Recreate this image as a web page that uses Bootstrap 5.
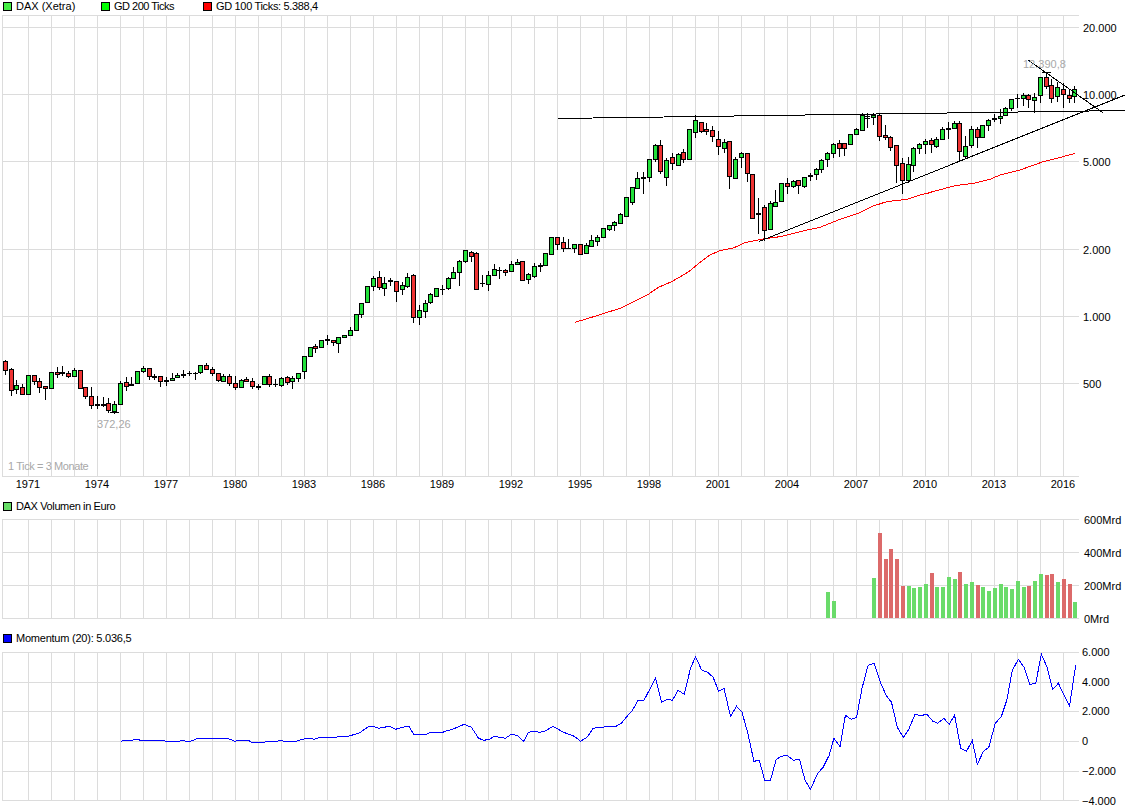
<!DOCTYPE html>
<html lang="de">
<head>
<meta charset="utf-8">
<title>DAX (Xetra)</title>
<link href="https://cdn.jsdelivr.net/npm/bootstrap@5.3.0/dist/css/bootstrap.min.css" rel="stylesheet">
<style>
body{background:#fff;color:#000;font-family:"Liberation Sans",Arial,sans-serif;font-size:11px;line-height:12px;overflow:hidden}
.chart-page{width:1125px;height:812px}
.legend-row{height:15px;padding-left:3px;padding-top:0}
.legend-row.pad-vol{padding-top:1px}
.legend-row.pad-mom{padding-top:2px}
.legend-item{width:98px;gap:4px;white-space:nowrap}
.legend-item.w-b{width:102px}
.swatch{width:9px;height:9px;border:1px solid #000;display:block;flex:none}
.sw-dax{background:#44ee44}.sw-g200{background:#00ff00}.sw-g100{background:#ff0000}.sw-vol{background:#66dd66}.sw-mom{background:#0000ff}
.ls-a{letter-spacing:-.5px}.ls-b{letter-spacing:-.33px}.ls-c{letter-spacing:-.37px}.ls-d{letter-spacing:-.23px}
.panel-svg{display:block;width:1125px}
.ps-main{height:484px}.ps-vol{height:116px}.ps-mom{height:167px}
.panel-svg text{font-family:"Liberation Sans",Arial,sans-serif;font-size:11px;fill:#000;dominant-baseline:central}
.panel-svg text.note{fill:#a8a8a8}
.panel-svg text.note-t{letter-spacing:-.4px}
.gridl{stroke:#dcdcdc;stroke-width:1;shape-rendering:crispEdges}
.trend{stroke:#000;fill:none;stroke-width:1;shape-rendering:crispEdges}
.wick{stroke:#000;stroke-width:1;shape-rendering:crispEdges}
.body-g{fill:#22e03a;stroke:#000;stroke-width:1;shape-rendering:crispEdges}
.body-r{fill:#ee3333;stroke:#000;stroke-width:1;shape-rendering:crispEdges}
.ma{stroke:#ff0000;fill:none;stroke-width:1;shape-rendering:crispEdges}
.mom{stroke:#0000ff;fill:none;stroke-width:1;shape-rendering:crispEdges}
.bar-g{fill:#6adb6a;shape-rendering:crispEdges}
.bar-r{fill:#dc6a6a;shape-rendering:crispEdges}
</style>
</head>
<body class="m-0">
<main class="chart-page d-flex flex-column">
  <div class="legend-row d-flex align-items-start">
    <div class="legend-item d-flex align-items-center"><span class="swatch sw-dax"></span><span>DAX (Xetra)</span></div>
    <div class="legend-item w-b d-flex align-items-center"><span class="swatch sw-g200"></span><span class="ls-a">GD 200 Ticks</span></div>
    <div class="legend-item d-flex align-items-center"><span class="swatch sw-g100"></span><span class="ls-b">GD 100 Ticks: 5.388,4</span></div>
  </div>
  <svg id="pMain" class="panel-svg ps-main" viewBox="0 15 1125 484" xmlns="http://www.w3.org/2000/svg"></svg>
  <div class="legend-row pad-vol d-flex align-items-start">
    <div class="legend-item d-flex align-items-center"><span class="swatch sw-vol"></span><span class="ls-c">DAX Volumen in Euro</span></div>
  </div>
  <svg id="pVol" class="panel-svg ps-vol" viewBox="0 514 1125 116" xmlns="http://www.w3.org/2000/svg"></svg>
  <div class="legend-row pad-mom d-flex align-items-start">
    <div class="legend-item d-flex align-items-center"><span class="swatch sw-mom"></span><span class="ls-d">Momentum (20): 5.036,5</span></div>
  </div>
  <svg id="pMom" class="panel-svg ps-mom" viewBox="0 645 1125 167" xmlns="http://www.w3.org/2000/svg"></svg>
</main>
<script>
const NS='http://www.w3.org/2000/svg';
function el(p,n,a,t){const e=document.createElementNS(NS,n);for(const k in a)e.setAttribute(k,a[k]);if(t!==undefined)e.textContent=t;p.appendChild(e);return e;}
function grid(p,top,bot,ys){
  for(const y of ys)el(p,'line',{x1:2,x2:1079,y1:y+.5,y2:y+.5,class:'gridl'});
  el(p,'line',{x1:2.5,x2:2.5,y1:top,y2:bot+1,class:'gridl'});
  for(let x=28;x<=1063;x+=23)el(p,'line',{x1:x+.5,x2:x+.5,y1:top,y2:bot+1,class:'gridl'});
}
const cx=i=>Math.floor(5.3+5.75*i);

const m=document.getElementById('pMain'),v=document.getElementById('pVol'),o=document.getElementById('pMom');
grid(m,15,476,[15,27,94,161,249,316,383,476]);
grid(v,519,618,[519,552,585,618]);
grid(o,652,800,[652,682,711,741,771,800]);

/* candles: colour, body top, body bottom, high, low, in page px */
const c=[
['R',361,370,360,374],['R',369,390,368,395],['G',385,389,380,393],['R',387,394,384,394],['G',375,394,375,394],
['R',375,381,375,384],['R',381,387,378,392],['R',386,388,386,399],['G',372,388,372,388],['R',372,374,367,377],
['F',372,373,366,375],['R',373,376,371,377],['G',370,376,368,376],['R',370,388,370,388],['R',387,396,387,398],
['R',396,405,387,408],['F',404,405,396,408],['F',404,405,397,406],['R',403,410,398,412],['G',404,411,401,413],
['G',383,404,381,404],['R',382,386,377,390],['F',384,385,377,385],['G',371,383,371,383],['G',368,371,366,372],
['R',368,376,368,379],['F',376,377,374,379],['R',376,381,376,386],['F',380,381,377,385],['G',378,380,373,380],
['G',375,377,373,377],['F',374,375,370,377],['F',373,373,371,375],['F',373,373,372,379],['G',365,372,365,373],
['R',365,369,363,369],['R',369,373,367,375],['R',373,380,373,381],['G',376,381,374,381],['R',376,383,374,385],
['R',383,387,376,389],['G',380,387,379,387],['R',379,381,377,381],['R',381,386,378,388],['F',386,387,384,389],
['G',376,384,376,384],['R',376,384,374,386],['F',384,384,379,386],['G',378,385,377,386],['R',377,382,376,384],
['G',378,381,376,388],['G',373,378,373,381],['G',356,371,356,378],['G',347,356,347,356],['R',346,348,344,352],
['G',340,347,340,347],['F',339,340,335,344],['R',340,342,340,345],['G',337,343,337,352],['G',335,337,335,337],
['G',330,335,327,335],['G',314,330,314,330],['G',303,314,303,317],['G',286,302,286,302],['G',278,286,276,290]
];
const z3=[
['R',532,560,514,566],['G',550,563,530,585],['F',541,543,533,555],['R',544,572,544,603],['G',556,567,545,583],
['G',532,557,518,560],['R',525,650,522,666],['G',631,650,616,672],['G',610,632,600,650],['G',583,605,580,608],
['G',565,587,565,587],['F',566,568,556,582],['G',535,563,532,566],['G',517,533,502,533],['G',482,517,480,555],
['G',451,482,450,485],['R',457,467,454,483],['R',460,566,456,566],['F',548,550,525,557],['G',526,551,514,570],
['G',508,526,492,526],['F',509,511,502,533],['R',511,517,508,525],['G',493,512,484,512],['G',487,493,477,493],
['R',484,539,482,539],['G',523,536,518,548],['G',499,527,490,530],['F',496,498,490,513],['G',460,494,458,496],
['G',412,461,412,461],['R',412,431,412,447],['R',427,445,411,453],['F',443,445,418,445],['G',433,445,433,456],
['R',433,461,433,461],['G',436,458,428,458],['G',421,437,406,437],['G',411,422,405,435],['G',385,410,383,410],
['G',376,386,376,389],['G',367,376,363,390],['G',343,368,340,368],['G',292,347,290,347],['G',262,305,262,312],
['G',235,263,217,263],['F',232,235,217,278],['G',178,230,178,243],['G',135,176,132,182],['R',135,212,120,218],
['G',181,230,175,255],['R',172,190,159,207],['G',163,194,160,194],['R',157,176,148,185],['G',88,176,88,176],
['G',61,97,46,110],['R',67,92,65,95],['R',88,94,68,101],['R',91,109,79,122],['R',118,139,94,162],
['G',127,143,118,157],['R',124,227,124,264],['G',176,233,172,233],['G',160,172,156,201],['R',160,220,160,243],
['R',223,355,223,355],['F',340,343,295,398],['R',322,391,316,420],['G',310,388,303,388],['G',307,317,270,317],
['G',250,302,250,302],['R',250,259,235,280],['G',243,259,240,262],['R',241,256,241,278],['G',230,257,230,260],
['F',224,228,220,240],['G',208,223,203,236],['G',181,208,178,215],['G',160,178,155,198],['G',133,160,130,170],
['R',130,145,120,168]
];
const z5=[
['R',280,295,280,315],['G',253,281,253,281],['G',238,253,235,253],['G',195,239,188,239],['F',199,203,188,230],
['G',196,202,188,222],['R',196,257,188,271],['R',256,262,225,268],['R',262,290,258,300],['R',286,344,286,395],
['R',340,391,325,430],['G',343,391,322,395],['G',295,344,292,362],['G',282,295,280,310],['G',273,281,268,310],
['R',271,283,265,305],['G',268,288,262,290],['G',238,268,232,268],['F',235,238,215,265],['G',220,233,212,233],
['R',220,304,212,330],['G',287,317,258,325],['G',238,286,228,290],['R',238,262,232,290],['G',226,262,225,262],
['G',211,226,208,240],['F',205,208,192,212],['G',199,205,178,220],['G',175,196,170,196],['G',146,175,146,180],
['F',144,145,132,170],['G',136,145,128,165],['R',136,148,132,170],['G',140,149,128,185],['G',82,136,82,155],
['R',82,107,68,115],['R',104,143,88,155],['G',112,139,95,152],['R',118,133,100,172],['R',135,143,118,155],
['G',118,139,108,155]
];
const all=c.concat(
  z3.map(a=>[a[0],100+a[1]/3,100+a[2]/3,100+a[3]/3,100+a[4]/3].map((n,j)=>j?Math.round(n):n)),
  z5.map(a=>[a[0],50+a[1]/3,50+a[2]/3,50+a[3]/3,50+a[4]/3].map((n,j)=>j?Math.round(n):n))
);

/* red moving average */
const ma=[[600,667],[640,655],[735,625],[820,583],[850,562],[890,545],[940,516]]
  .map(p=>[375+p[0]/3,100+p[1]/3])
  .concat([[0,247],[30,225],[60,212],[100,204],[135,188],[160,183],[190,177],[240,170],[320,150],[360,142],[420,118],[480,98],[520,78],[560,65],[620,58],[660,45],[690,38]].map(p=>[700+p[0]/3,180+p[1]/3]))
  .concat([[260,430],[345,407],[400,400],[450,388],[480,375],[540,360],[610,335],[650,325],[706,310]].map(p=>[840+p[0]/3,50+p[1]/3]));
el(m,'polyline',{points:ma.map(p=>p.join(',')).join(' '),class:'ma'});

all.forEach((d,i)=>{
  const x=cx(i),[k,t,b,h,l]=d;
  el(m,'line',{x1:x+.5,x2:x+.5,y1:h,y2:l+1,class:'wick'});
  if(k==='F'){el(m,'line',{x1:x-2,x2:x+3,y1:t+.5,y2:t+.5,class:'wick'});if(b>t)el(m,'line',{x1:x-2,x2:x+3,y1:b+.5,y2:b+.5,class:'wick'});}
  else el(m,'rect',{x:x-1.5,y:t+.5,width:4,height:Math.max(1,b-t),class:k==='G'?'body-g':'body-r'});
});
/* low and high markers */
el(m,'line',{x1:110,x2:119,y1:412.5,y2:412.5,class:'wick'});
el(m,'line',{x1:1042,x2:1051,y1:72.5,y2:72.5,class:'wick'});

/* trend lines */
el(m,'line',{x1:558,y1:118.5,x2:1125,y2:110.5,class:'trend'});
el(m,'line',{x1:759,y1:241.5,x2:1125,y2:95,class:'trend'});
el(m,'line',{x1:1028,y1:60,x2:1103,y2:112.7,class:'trend'});

/* price axis */
[['20.000',28],['10.000',95],['5.000',162],['2.000',250],['1.000',317],['500',384]].forEach(a=>el(m,'text',{x:1083,y:a[1]},a[0]));
for(let y=0;y<16;y++)el(m,'text',{x:28+69*y,y:484,'text-anchor':'middle'},String(1971+3*y));
el(m,'text',{x:97,y:424,class:'note'},'372,26');
el(m,'text',{x:8,y:466,class:'note note-t'},'1 Tick = 3 Monate');
el(m,'text',{x:1023,y:64,class:'note'},'12.390,8');

/* volume */
const vb=[[143,'G',291],[144,'G',318]];
[['G',249],['R',114],['R',192],['R',162],['R',192],['R',273],['G',273],['G',279],['G',276],['G',267],['R',234],['G',276],
 ['G',276],['G',246],['G',252],['R',231],['G',267],['G',261],['R',270],['G',276],['G',288],['G',279],['G',267],['G',276],
 ['G',282],['G',258],['G',276],['R',273],['G',258],['G',237],['R',240],['R',237],['G',261],['R',252],['R',267],['G',321]]
 .forEach((a,n)=>vb.push([151+n,a[0],a[1]]));
vb.forEach(a=>{const y=Math.round(495+a[2]/3);el(v,'rect',{x:cx(a[0])-1,y:y,width:4,height:618-y,class:a[1]==='G'?'bar-g':'bar-r'});});
[['600Mrd',520],['400Mrd',553],['200Mrd',586],['0Mrd',619]].forEach(a=>el(v,'text',{x:1084,y:a[1]},a[0]));

/* momentum */
const m7=[[338,364],[350,361],[370,361],[380,358],[395,361],[455,361],[465,364],[500,364],[512,361],[522,364],[535,363],[555,355],[600,355],[610,357],[630,355],[645,358],[658,364],[670,361],[695,361],[705,367],[730,367],[775,364],[785,361],[795,364],[830,364],[845,358],[865,355],[880,358],[895,352],[940,352],[950,349],[975,349],[990,344],[1005,340],[1015,332],[1030,321],[1045,319],[1060,325],[1075,322],[1090,319],[1108,328],[1125,322],[1145,319],[1158,343],[1195,343],[1205,337],[1240,337],[1250,332],[1265,329],[1280,322],[1300,313],[1320,322],[1340,355],[1355,361],[1370,358],[1385,349],[1400,352],[1415,355],[1432,343],[1448,346],[1466,364],[1480,337],[1497,334],[1510,337],[1525,334],[1548,319]];
const m8=[[0,331],[10,337],[40,349],[57,364],[75,352],[92,325],[110,322],[155,319],[170,310],[185,290],[200,272],[217,241],[233,241],[265,175],[282,247],[297,238],[312,241],[328,211],[345,223],[362,145],[376,110],[393,150],[410,157],[425,172],[440,214],[455,205],[473,289],[490,259],[505,277],[522,343],[538,424],[553,421],[568,481],[584,481],[600,418],[615,409],[630,406],[648,421],[665,418],[680,481],[695,508],[715,460],[730,442],[747,406],[760,355],[777,380],[792,286],[808,298],[823,292],[838,205],[855,136],[872,130],[888,184],[905,226],[920,247],[936,322],[953,352],[968,328],[985,283],[1000,287],[1018,283],[1035,304],[1048,310],[1065,295],[1080,313],[1095,286],[1112,385],[1128,394],[1144,361],[1158,433],[1175,394],[1190,382],[1208,310],[1225,289],[1240,241],[1255,151],[1272,118],[1288,142],[1304,193],[1320,190],[1336,103],[1352,142],[1367,208],[1383,190],[1414,259],[1431,135]];
const mp=m7.map(p=>[p[0]/2.8,620+p[1]/3]).concat(m8.map(p=>[560+p[0]/2.775,620+p[1]/3]));
el(o,'polyline',{points:mp.map(p=>p.map(n=>n.toFixed(1)).join(',')).join(' '),class:'mom'});
[['6.000',652],['4.000',682],['2.000',711],['0',741],['\u22122.000',771],['\u22124.000',801]].forEach(a=>el(o,'text',{x:1082,y:a[1]},a[0]));
</script>
<script src="https://cdn.jsdelivr.net/npm/bootstrap@5.3.0/dist/js/bootstrap.bundle.min.js"></script>
</body>
</html>
